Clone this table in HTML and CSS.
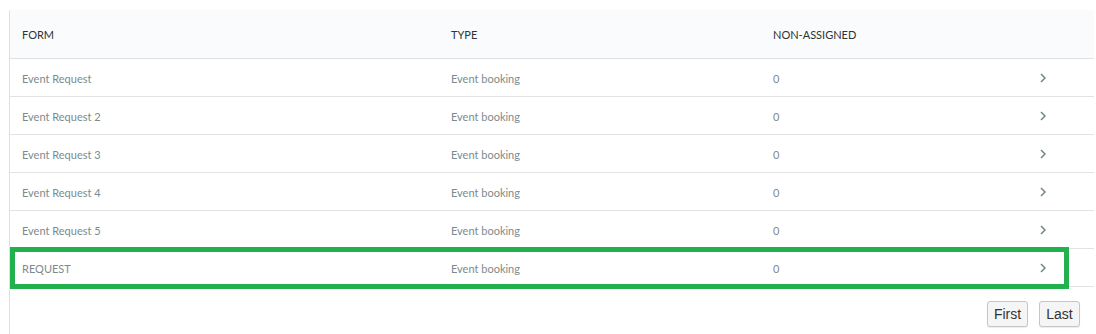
FILE: index.html
```html
<!DOCTYPE html>
<html>
<head>
<meta charset="utf-8">
<link rel="stylesheet" href="styles.css">
</head>
<body>
<div class="panel">
  <div class="table">
    <div class="row head">
      <div class="c1">FORM</div><div class="c2">TYPE</div><div class="c3">NON-ASSIGNED</div><div class="c4"></div>
    </div>
    <div class="row">
      <div class="c1">Event Request</div><div class="c2">Event booking</div><div class="c3">0</div><div class="c4"><svg class="chev" width="6" height="10" viewBox="0 0 6 10"><path d="M1 1 L5 5 L1 9" fill="none" stroke="#6f8584" stroke-width="1.5"/></svg></div>
    </div>
    <div class="row">
      <div class="c1">Event Request 2</div><div class="c2">Event booking</div><div class="c3">0</div><div class="c4"><svg class="chev" width="6" height="10" viewBox="0 0 6 10"><path d="M1 1 L5 5 L1 9" fill="none" stroke="#6f8584" stroke-width="1.5"/></svg></div>
    </div>
    <div class="row">
      <div class="c1">Event Request 3</div><div class="c2">Event booking</div><div class="c3">0</div><div class="c4"><svg class="chev" width="6" height="10" viewBox="0 0 6 10"><path d="M1 1 L5 5 L1 9" fill="none" stroke="#6f8584" stroke-width="1.5"/></svg></div>
    </div>
    <div class="row">
      <div class="c1">Event Request 4</div><div class="c2">Event booking</div><div class="c3">0</div><div class="c4"><svg class="chev" width="6" height="10" viewBox="0 0 6 10"><path d="M1 1 L5 5 L1 9" fill="none" stroke="#6f8584" stroke-width="1.5"/></svg></div>
    </div>
    <div class="row">
      <div class="c1">Event Request 5</div><div class="c2">Event booking</div><div class="c3">0</div><div class="c4"><svg class="chev" width="6" height="10" viewBox="0 0 6 10"><path d="M1 1 L5 5 L1 9" fill="none" stroke="#6f8584" stroke-width="1.5"/></svg></div>
    </div>
    <div class="row highlighted">
      <div class="c1">REQUEST</div><div class="c2">Event booking</div><div class="c3">0</div><div class="c4"><svg class="chev" width="6" height="10" viewBox="0 0 6 10"><path d="M1 1 L5 5 L1 9" fill="none" stroke="#6f8584" stroke-width="1.5"/></svg></div>
      <div class="mark"></div>
    </div>
  </div>
  <div class="pager">
    <button class="btn">First</button>
    <button class="btn">Last</button>
  </div>
</div>
</body>
</html>
```
FILE: styles.css
```css
html, body {
  margin: 0;
  padding: 0;
  background: #fff;
}
body {
  font-family: Lato, "Open Sans", sans-serif;
  height: 334px;
  overflow: hidden;
}
.panel {
  margin: 10px 2px 0 9px;
  border-left: 1px solid #e0e0e0;
  height: 324px;
}
.table {
  width: 1084px;
}
.row {
  position: relative;
  display: grid;
  grid-template-columns: 429px 322px 267px 66px;
  height: 37px;
  border-bottom: 1px solid #e2e2e2;
  align-items: center;
  font-size: 11px;
  color: #7d8b8c;
}
.row > div {
  padding-left: 12px;
  padding-top: 1px;
}
.row > .c4 {
  padding-top: 0;
}
.row.head {
  height: 48px;
  background: #fafbfc;
  color: #2e3335;
  border-bottom: 1px solid #dfe1e1;
}
.row.head > div {
  padding-top: 0;
}
.c4 {
  display: flex;
  align-items: center;
}
.chev {
  display: block;
}
.mark {
  position: absolute;
  left: 0;
  top: -2px;
  width: 1049px;
  height: 32px;
  border: 5px solid #22b14c;
  padding: 0 !important;
  pointer-events: none;
}
.pager {
  display: flex;
  justify-content: flex-end;
  gap: 11px;
  width: 1070px;
  margin-top: 14px;
}
.btn {
  width: 41px;
  height: 26px;
  padding: 0;
  font-family: "Liberation Sans", Arial, sans-serif;
  font-size: 14px;
  color: #333;
  background: #f5f5f5;
  border: 1px solid #c6c6c6;
  border-radius: 3px;
  box-shadow: 0 1px 1px rgba(0,0,0,0.08);
}
```
